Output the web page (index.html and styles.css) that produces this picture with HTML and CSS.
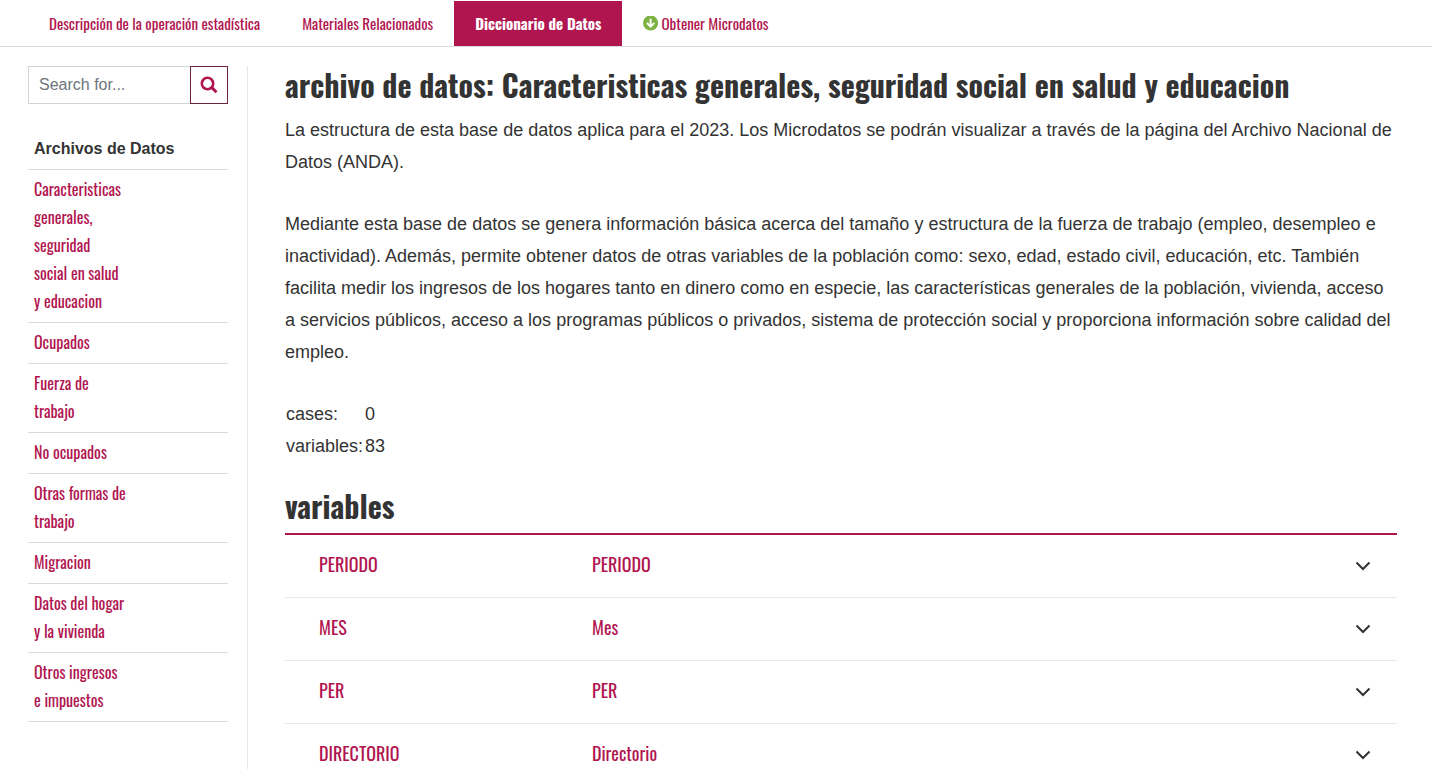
FILE: index.html
```html
<!DOCTYPE html>
<html lang="es">
<head>
<meta charset="utf-8">
<meta name="viewport" content="width=device-width, initial-scale=1">
<title>Diccionario de Datos</title>
<link rel="stylesheet" href="styles.css">
</head>
<body>
<nav class="tabs" aria-label="Secciones">
  <a class="tab" href="#descripcion">Descripción de la operación estadística</a>
  <a class="tab" href="#materiales">Materiales Relacionados</a>
  <a class="tab tab-active" href="#diccionario" aria-current="page">Diccionario de Datos</a>
  <a class="tab tab-download" href="#microdatos">
    <svg class="tab-icon" viewBox="0 0 16 16" aria-hidden="true"><circle cx="7.6" cy="7" r="7.6" fill="#7cb342"/><path d="M7.6 2.8v8M3.9 6.9l3.7 3.7 3.7-3.7" fill="none" stroke="#fff" stroke-width="2"/></svg>
    <span>Obtener Microdatos</span>
  </a>
</nav>
<div class="page">
  <aside class="sidebar">
    <form class="search">
      <input class="search-input" type="text" placeholder="Search for..." aria-label="Search for">
      <button class="search-button" type="submit" aria-label="Search">
        <svg class="search-icon" viewBox="0 0 18 18" aria-hidden="true"><circle cx="7.5" cy="7.5" r="5.7" fill="none" stroke="#b1154f" stroke-width="2.6"/><path d="m11.6 11.4 4.9 4.9" stroke="#b1154f" stroke-width="3"/></svg>
      </button>
    </form>
    <ul class="files">
      <li class="files-title">Archivos de Datos</li>
      <li class="file"><a class="file-link" href="#f1">Caracteristicas<br>generales,<br>seguridad<br>social en salud<br>y educacion</a></li>
      <li class="file"><a class="file-link" href="#f2">Ocupados</a></li>
      <li class="file"><a class="file-link" href="#f3">Fuerza de<br>trabajo</a></li>
      <li class="file"><a class="file-link" href="#f4">No ocupados</a></li>
      <li class="file"><a class="file-link" href="#f5">Otras formas de<br>trabajo</a></li>
      <li class="file"><a class="file-link" href="#f6">Migracion</a></li>
      <li class="file"><a class="file-link" href="#f7">Datos del hogar<br>y la vivienda</a></li>
      <li class="file"><a class="file-link" href="#f8">Otros ingresos<br>e impuestos</a></li>
    </ul>
  </aside>
  <main class="content">
    <h1 class="title">archivo de datos: Caracteristicas generales, seguridad social en salud y educacion</h1>
    <p class="text">La estructura de esta base de datos aplica para el 2023. Los Microdatos se podrán visualizar a través de la página del Archivo Nacional de Datos (ANDA).</p>
    <p class="text">Mediante esta base de datos se genera información básica acerca del tamaño y estructura de la fuerza de trabajo (empleo, desempleo e inactividad). Además, permite obtener datos de otras variables de la población como: sexo, edad, estado civil, educación, etc. También facilita medir los ingresos de los hogares tanto en dinero como en especie, las características generales de la población, vivienda, acceso a servicios públicos, acceso a los programas públicos o privados, sistema de protección social y proporciona información sobre calidad del empleo.</p>
    <table class="counts">
      <tbody>
        <tr><th scope="row">cases:</th><td>0</td></tr>
        <tr><th scope="row">variables:</th><td>83</td></tr>
      </tbody>
    </table>
    <h2 class="title title-list">variables</h2>
    <div class="variables">
      <div class="variable"><a class="variable-name" href="#v1">PERIODO</a><a class="variable-label" href="#v1">PERIODO</a><button class="toggle" type="button" aria-label="PERIODO"><svg class="chevron" viewBox="0 0 16 10" aria-hidden="true"><path d="m1.5 1.5 6.5 6.5 6.5-6.5"/></svg></button></div>
      <div class="variable"><a class="variable-name" href="#v2">MES</a><a class="variable-label" href="#v2">Mes</a><button class="toggle" type="button" aria-label="Mes"><svg class="chevron" viewBox="0 0 16 10" aria-hidden="true"><path d="m1.5 1.5 6.5 6.5 6.5-6.5"/></svg></button></div>
      <div class="variable"><a class="variable-name" href="#v3">PER</a><a class="variable-label" href="#v3">PER</a><button class="toggle" type="button" aria-label="PER"><svg class="chevron" viewBox="0 0 16 10" aria-hidden="true"><path d="m1.5 1.5 6.5 6.5 6.5-6.5"/></svg></button></div>
      <div class="variable"><a class="variable-name" href="#v4">DIRECTORIO</a><a class="variable-label" href="#v4">Directorio</a><button class="toggle" type="button" aria-label="Directorio"><svg class="chevron" viewBox="0 0 16 10" aria-hidden="true"><path d="m1.5 1.5 6.5 6.5 6.5-6.5"/></svg></button></div>
    </div>
  </main>
</div>
</body>
</html>
```
FILE: styles.css
```css
:root {
  --accent: #b1154f;
  --ink: #333;
  --line: #d9dadc;
  --narrow: Oswald, "Liberation Sans Narrow", "Arial Narrow", sans-serif;
  --sans: "Liberation Sans", Arial, sans-serif;
}

* {
  box-sizing: border-box;
}

body {
  margin: 0;
  background: #fff;
  color: var(--ink);
  font: 18px/32px var(--sans);
}

a {
  color: var(--accent);
  text-decoration: none;
}

.tabs {
  display: flex;
  padding: 1px 28px 0;
  border-bottom: 1px solid var(--line);
  font: 15px/45px var(--narrow);
  white-space: nowrap;
}

.tab {
  padding: 0 21px;
}

.tab-active {
  background: var(--accent);
  color: #fff;
  font-weight: 700;
}

.tab-download {
  display: flex;
  align-items: center;
  gap: 2px;
}

.tab-icon {
  width: 16px;
  height: 16px;
}

.page {
  display: flex;
  padding: 19px 35px 0 28px;
}

.sidebar {
  flex: none;
  width: 220px;
  padding-right: 19px;
  border-right: 1px solid #e6e6e8;
}

.search {
  display: flex;
}

.search-input {
  flex: 1;
  min-width: 0;
  height: 38px;
  padding: 0 10px;
  border: 1px solid #ced4da;
  border-right: 0;
  border-radius: 0;
  color: var(--ink);
  font: 16px var(--sans);
}

.search-input::placeholder {
  color: #6c757d;
  opacity: 1;
}

.search-button {
  display: flex;
  align-items: center;
  justify-content: center;
  width: 38px;
  height: 38px;
  padding: 0;
  border: 1px solid #6b2338;
  background: #fff;
}

.search-icon {
  width: 18px;
  height: 18px;
}

.files {
  margin: 25px 0 0;
  padding: 0;
  list-style: none;
  font-size: 16px;
  line-height: 28px;
}

.files-title,
.file {
  border-bottom: 1px solid var(--line);
}

.files-title {
  padding: 6px;
  font-weight: 700;
}

.file {
  padding: 5px 6px 7px;
  font-family: var(--narrow);
}

.content {
  flex: 1;
  min-width: 0;
  padding-left: 37px;
}

.title {
  margin: 0 0 10px;
  font: 700 30px/38px var(--narrow);
}

.text {
  margin: 0 0 30px;
}

.counts {
  border-spacing: 0;
}

.counts th,
.counts td {
  padding: 0 1px;
  font-weight: 400;
  text-align: left;
}

.title-list {
  margin: 25px 0 0;
  padding-bottom: 8px;
  border-bottom: 2px solid var(--accent);
}

.variable {
  display: grid;
  grid-template-columns: 273px 1fr 40px;
  align-items: center;
  height: 63px;
  padding: 0 14px 4px 34px;
  border-bottom: 1px solid #e9e9eb;
  font-family: var(--narrow);
}

.toggle {
  display: flex;
  align-items: center;
  justify-content: center;
  height: 32px;
  padding: 4px 0 0;
  border: 0;
  background: none;
}

.chevron {
  width: 16px;
  height: 10px;
  fill: none;
  stroke: #333;
  stroke-width: 2;
}
```
